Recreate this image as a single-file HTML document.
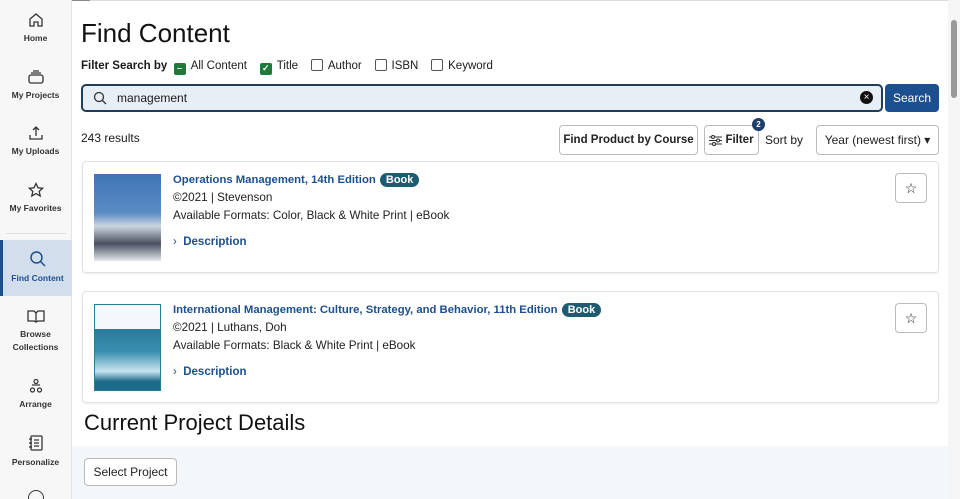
<!DOCTYPE html>
<html><head><style>
*{box-sizing:border-box;margin:0;padding:0}
html,body{width:960px;height:499px;overflow:hidden}
body{font-family:"Liberation Sans",sans-serif;background:#fff;position:relative;color:#1a1a1a}
.side{position:absolute;left:0;top:0;width:72px;height:499px;background:#f7f7f7;border-right:1px solid #e3e3e3}
.si{position:absolute;left:0;width:71px;text-align:center;font-size:8.5px;font-weight:bold;color:#333;line-height:13px}
.si svg{display:block;margin:0 auto 4px}
.act{background:#d3deec;border-left:3px solid #1c4f8f}
.a{position:absolute}
h1{position:absolute;left:81px;top:18px;font-size:26px;font-weight:normal;color:#111}
.cb{display:inline-block;width:12px;height:12px;border:1.5px solid #555;border-radius:2px;vertical-align:-2px;margin-right:5px;position:relative}
.cg{background:#1f7a3a;border-color:#1f7a3a;color:#fff;font-size:9px;line-height:9px;text-align:center;font-weight:bold}
.btn{position:absolute;border:1px solid #bbb;border-radius:4px;background:#fff;font-size:11.5px;font-weight:bold;display:flex;align-items:center;justify-content:center;color:#222;white-space:nowrap}
.card{position:absolute;left:82px;width:857px;border:1px solid #e2e2e2;border-radius:4px;box-shadow:0 1px 2px rgba(0,0,0,.08)}
.t{position:absolute;left:90px;font-size:11.3px;color:#1c4f8f;font-weight:bold;white-space:nowrap}
.badge{display:inline-block;background:#1d5b70;color:#fff;border-radius:9px;padding:1px 6px;font-size:11px;margin-left:1px}
.l{position:absolute;left:90px;font-size:11.7px;color:#222;white-space:nowrap}
.d{position:absolute;left:90px;font-size:11.5px;color:#1c4f8f;font-weight:bold}
.star{position:absolute;right:11px;top:11px;width:32px;height:30px;border:1px solid #bbb;border-radius:4px;display:flex;align-items:center;justify-content:center;font-size:14px}
</style></head><body>
<div class="a" style="left:0;top:0;width:90px;height:1px;background:#888"></div>
<div class="a" style="left:90px;top:0;width:858px;height:1px;background:#ddd"></div>
<div class="side">
<div class="si" style="top:12px"><svg width="16" height="16" viewBox="0 0 16 16" fill="none" stroke="#333" stroke-width="1.3"><path d="M2 7L8 2l6 5v7H10v-4H6v4H2z"/></svg>Home</div>
<div class="si" style="top:69px"><svg width="18" height="16" viewBox="0 0 18 16" fill="none" stroke="#333" stroke-width="1.3"><rect x="2" y="6" width="14" height="8" rx="2"/><path d="M4 4h10M6 2h6"/></svg>My Projects</div>
<div class="si" style="top:125px"><svg width="16" height="16" viewBox="0 0 16 16" fill="none" stroke="#333" stroke-width="1.3"><path d="M8 11V2M5 5l3-3 3 3M2 10v4h12v-4"/></svg>My Uploads</div>
<div class="si" style="top:182px"><svg width="16" height="16" viewBox="0 0 16 16" fill="none" stroke="#333" stroke-width="1.3"><path d="M8 1.5l2 4.3 4.6.5-3.4 3.1 1 4.6L8 11.6 3.8 14l1-4.6L1.4 6.3 6 5.8z"/></svg>My Favorites</div>
<div class="a" style="left:6px;top:233px;width:60px;height:1px;background:#ddd"></div>
<div class="si act" style="top:240px;height:56px;padding-top:10px;color:#1c4f8f;width:72px"><svg width="18" height="18" viewBox="0 0 18 18" fill="none" stroke="#1c4f8f" stroke-width="1.5"><circle cx="7.5" cy="7.5" r="5.5"/><path d="M11.5 11.5L16 16"/></svg>Find Content</div>
<div class="si" style="top:308px"><svg width="18" height="16" viewBox="0 0 18 16" fill="none" stroke="#333" stroke-width="1.3"><path d="M1 3h6l2 2 2-2h6v10h-6l-2 1-2-1H1zM9 5v9"/></svg>Browse<br>Collections</div>
<div class="si" style="top:378px"><svg width="14" height="16" viewBox="0 0 14 16" fill="none" stroke="#333" stroke-width="1.2"><circle cx="7" cy="3.5" r="2"/><circle cx="3.5" cy="12" r="2"/><circle cx="10.5" cy="12" r="2"/><path d="M3 7h8"/></svg>Arrange</div>
<div class="si" style="top:434px"><svg width="16" height="18" viewBox="0 0 16 18" fill="none" stroke="#333" stroke-width="1.3"><rect x="3" y="2" width="11" height="14" rx="1"/><path d="M6 6h5M6 9h5M6 12h5M1 5h3M1 9h3M1 13h3"/></svg>Personalize</div>
<div class="a" style="left:28px;top:490px;width:16px;height:16px;border:1.3px solid #333;border-radius:50%"></div>
</div>
<h1>Find Content</h1>
<div class="a" style="left:81px;top:59px;font-size:11.5px;white-space:nowrap">
<b>Filter Search by</b>&nbsp;&nbsp;<span class="cb cg">–</span>All Content&nbsp;&nbsp;&nbsp;&nbsp;<span class="cb cg">✓</span>Title&nbsp;&nbsp;&nbsp;&nbsp;<span class="cb"></span>Author&nbsp;&nbsp;&nbsp;&nbsp;<span class="cb"></span>ISBN&nbsp;&nbsp;&nbsp;&nbsp;<span class="cb"></span>Keyword</div>
<div class="a" style="left:81px;top:84px;width:802px;height:28px;background:#e8eef6;border:2px solid #1d3d5a;border-radius:5px">
<svg class="a" style="left:10px;top:5px" width="14" height="14" viewBox="0 0 14 14" fill="none" stroke="#333" stroke-width="1.3"><circle cx="6" cy="6" r="4.5"/><path d="M9.5 9.5L13 13"/></svg>
<span class="a" style="left:34px;top:5px;font-size:12px">management</span>
<div class="a" style="right:8px;top:5px;width:13px;height:13px;border-radius:50%;background:#111;color:#fff;font-size:10px;line-height:13px;text-align:center">×</div></div>
<div class="a" style="left:885px;top:84px;width:54px;height:28px;background:#1c4f8f;border-radius:4px;color:#fff;font-size:12px;text-align:center;line-height:28px">Search</div>
<div class="a" style="left:81px;top:131px;font-size:12px">243 results</div>
<div class="btn" style="left:559px;top:125px;width:139px;height:30px">Find Product by Course</div>
<div class="btn" style="left:704px;top:125px;width:55px;height:30px"><svg width="13" height="11" viewBox="0 0 13 11" fill="none" stroke="#333" stroke-width="1.1" style="margin-right:3px"><path d="M0 2h13M0 5.5h13M0 9h13"/><circle cx="4" cy="2" r="1.5" fill="#fff"/><circle cx="9" cy="5.5" r="1.5" fill="#fff"/><circle cx="5" cy="9" r="1.5" fill="#fff"/></svg>Filter</div>
<div class="a" style="left:752px;top:118px;width:13px;height:13px;border-radius:50%;background:#1d3d6a;color:#fff;font-size:8px;font-weight:bold;text-align:center;line-height:13px">2</div>
<div class="a" style="left:765px;top:133px;font-size:12px">Sort by</div>
<div class="btn" style="left:816px;top:125px;width:123px;height:30px;font-weight:normal;font-size:12px">Year (newest first) ▾</div>
<div class="card" style="top:161px;height:112px">
<div class="a" style="left:11px;top:12px;width:67px;height:87px;background:linear-gradient(#3f75b5 0%,#5b8cc4 45%,#ccd6e0 60%,#4a5060 80%,#e5e8ec 100%)"></div>
<div class="t" style="top:11px">Operations Management, 14th Edition <span class="badge">Book</span></div>
<div class="l" style="top:29px">©2021 | Stevenson</div>
<div class="l" style="top:47px">Available Formats: Color, Black &amp; White Print | eBook</div>
<div class="d" style="top:74px"><span style="font-weight:normal">›</span>&nbsp; Description</div>
<div class="star">☆</div></div>
<div class="card" style="top:291px;height:112px">
<div class="a" style="left:11px;top:12px;width:67px;height:87px;background:linear-gradient(#f4f8fb 0%,#f4f8fb 28%,#2a7a9a 28%,#3a8fb0 55%,#c8e4ef 78%,#1e6a8a 90%,#1e6a8a 100%);border:1px solid #2a7a9a"></div>
<div class="t" style="top:11px">International Management: Culture, Strategy, and Behavior, 11th Edition <span class="badge">Book</span></div>
<div class="l" style="top:29px">©2021 | Luthans, Doh</div>
<div class="l" style="top:47px">Available Formats: Black &amp; White Print | eBook</div>
<div class="d" style="top:74px"><span style="font-weight:normal">›</span>&nbsp; Description</div>
<div class="star">☆</div></div>
<div class="a" style="left:84px;top:410px;font-size:22px;color:#111">Current Project Details</div>
<div class="a" style="left:72px;top:446px;width:876px;height:53px;background:#f4f7fa"></div>
<div class="btn" style="left:84px;top:458px;width:93px;height:28px;font-weight:normal;font-size:12px">Select Project</div>
<div class="a" style="left:948px;top:0;width:12px;height:499px;background:#f5f5f5"></div>
<div class="a" style="left:951px;top:20px;width:6px;height:78px;background:#999;border-radius:3px"></div>
</body></html>
